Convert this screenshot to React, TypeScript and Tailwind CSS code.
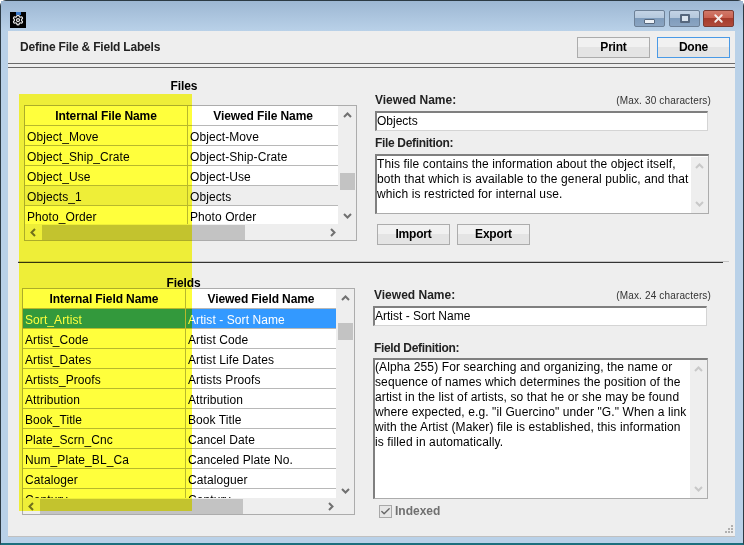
import React from "react";
import { Settings, X, Check } from "lucide-react";

const fileRows = [
	["Object_Move", "Object-Move"],
	["Object_Ship_Crate", "Object-Ship-Crate"],
	["Object_Use", "Object-Use"],
	["Objects_1", "Objects"],
	["Photo_Order", "Photo Order"],
];

const fieldRows = [
	["Sort_Artist", "Artist - Sort Name"],
	["Artist_Code", "Artist Code"],
	["Artist_Dates", "Artist Life Dates"],
	["Artists_Proofs", "Artists Proofs"],
	["Attribution", "Attribution"],
	["Book_Title", "Book Title"],
	["Plate_Scrn_Cnc", "Cancel Date"],
	["Num_Plate_BL_Ca", "Canceled Plate No."],
	["Cataloger", "Cataloguer"],
	["Century", "Century"],
];

// little scroll arrows, 9x6 chevrons
const Arrow = ({ dir, light }: { dir: "up" | "down" | "left" | "right"; light?: boolean }) => {
	const paths = {
		up: "M1 6 L4.5 2.5 L8 6",
		down: "M1 3 L4.5 6.5 L8 3",
		left: "M6 1 L2.5 4.5 L6 8",
		right: "M3 1 L6.5 4.5 L3 8",
	};
	return (
		<svg width="9" height="9" viewBox="0 0 9 9" fill="none" className="shrink-0">
			<path d={paths[dir]} stroke={light ? "#c8c8c8" : "#707070"} strokeWidth="2" />
		</svg>
	);
};

const Button = ({ label, focused }: { label: string; focused?: boolean }) => (
	<button
		className={`w-[73px] h-[21px] pb-[2px] border text-[12px] font-bold tracking-[-0.2px] text-black bg-[linear-gradient(#f1f1f1_0%,#f1f1f1_50%,#e4e4e4_50%,#e4e4e4_100%)] ${
			focused ? "border-[#4a9ae6]" : "border-[#acacac]"
		}`}
	>
		{label}
	</button>
);

const DataTable = ({
	headers,
	rows,
	selected,
	shaded,
	bodyHeight,
	thumbClass,
	downClass,
}: {
	headers: string[];
	rows: string[][];
	selected?: number;
	shaded?: number;
	bodyHeight: string;
	thumbClass: string;
	downClass: string;
}) => (
	<div className="w-[333px] border border-[#acacac] bg-[#eeeeee]">
		<div className="flex">
			<div className={`w-[313px] bg-white overflow-hidden ${bodyHeight}`}>
				<div className="flex h-[20px] border-b border-[#b8b8b8] font-bold text-[12px] tracking-[-0.1px] text-black">
					<div className="w-[163px] border-r border-[#b8b8b8] flex items-center justify-center">{headers[0]}</div>
					<div className="flex-1 flex items-center justify-center">{headers[1]}</div>
				</div>
				{rows.map((row, i) => (
					<div
						key={row[0]}
						className={`flex h-[20px] border-b border-[#b8b8b8] text-[12px] tracking-[0.08px] ${
							i === selected ? "bg-[#3399ff] text-white" : i === shaded ? "bg-[#eeeeee] text-black" : "bg-white text-black"
						}`}
					>
						<div className="w-[163px] border-r border-[#b8b8b8] pl-[2px] pt-[1px] leading-[20px] whitespace-nowrap">{row[0]}</div>
						<div className="flex-1 pl-[2px] pt-[1px] leading-[20px] whitespace-nowrap">{row[1]}</div>
					</div>
				))}
			</div>
			<div className="w-[18px] flex flex-col items-center pt-[5px]">
				<Arrow dir="up" />
				<div className={`w-[15px] h-[17px] bg-[#c3c3c3] ${thumbClass}`} />
				<div className={downClass}>
					<Arrow dir="down" />
				</div>
			</div>
		</div>
		<div className="flex items-center h-[16px] w-[331px] bg-[#eeeeee]">
			<div className="w-[17px] flex justify-center">
				<Arrow dir="left" />
			</div>
			<div className="w-[203px] h-[15px] bg-[#c3c3c3]" />
			<div className="flex-1 flex justify-end pr-[2px] mr-[17px]">
				<Arrow dir="right" />
			</div>
		</div>
	</div>
);

const TextBox = ({ lines, className }: { lines: string[]; className: string }) => (
	<div className={`flex border border-t-2 border-l-2 border-[#acacac] border-t-[#7f7f7f] border-l-[#7f7f7f] bg-white ${className}`}>
		<div className="flex-1 text-[12px] leading-[15px] tracking-[0.11px] text-black whitespace-nowrap">
			{lines.map((l) => (
				<div key={l}>{l}</div>
			))}
		</div>
		<div className="w-[17px] bg-[#eeeeee] flex flex-col items-center justify-between py-[5px]">
			<Arrow dir="up" light />
			<Arrow dir="down" light />
		</div>
	</div>
);

const NameInput = ({ value, className }: { value: string; className: string }) => (
	<div className={`h-[20px] border border-t-2 border-l-2 border-[#d4d4d4] border-t-[#7f7f7f] border-l-[#7f7f7f] bg-white text-[12px] leading-[16px] text-black ${className}`}>
		{value}
	</div>
);

const FieldLabel = ({ text, note, tight }: { text: string; note?: string; tight?: boolean }) => (
	<div className="flex items-baseline justify-between h-[13px] leading-[13px]">
		<span className={`text-[12px] font-bold text-[#222222] ${tight ? "tracking-[-0.33px]" : ""}`}>{text}</span>
		{note && <span className="text-[10px] text-[#333333] tracking-[0.15px]">{note}</span>}
	</div>
);

const CaptionButton = ({ children, className }: { children: React.ReactNode; className: string }) => (
	<div className={`w-[31px] h-[17px] rounded-[2px] border flex items-center justify-center ${className}`}>{children}</div>
);

export default function App() {
	return (
		<div
			className="relative w-[744px] h-[545px] overflow-hidden bg-white"
			style={{ fontFamily: '"Liberation Sans", Arial, sans-serif' }}
		>
			<div className="w-full h-full flex flex-col rounded-t-[6px] border border-b-2 border-[#2c3a44] border-b-[#1d6f7d] bg-[#b9d1e8]">
				{/* title bar */}
				<div className="h-[30px] flex items-start shrink-0 bg-[linear-gradient(#9db7d3,#b9d1e8)]">
					<div className="relative ml-[9px] mt-[11px] w-[16px] h-[16px] bg-black flex items-center justify-center">
						<div className="absolute left-[6px] top-0 w-[5px] h-[3px] bg-[#3a78c8]" />
						<Settings size={12} color="#e8e8e8" strokeWidth={2.5} />
					</div>
					<div className="ml-auto mr-[9px] mt-[9px] flex">
						<CaptionButton className="mr-[4px] border-[#6d8096] bg-[linear-gradient(#c3d3e5,#b4c7dc_50%,#7f9cbc_50%,#8ba5c2)]">
							<div className="mt-[5px] w-[11px] h-[5px] rounded-[1px] border border-[#56677d] bg-[#eef2f7]" />
						</CaptionButton>
						<CaptionButton className="mr-[3px] border-[#6d8096] bg-[linear-gradient(#c3d3e5,#b4c7dc_50%,#7f9cbc_50%,#8ba5c2)]">
							<div className="w-[10px] h-[9px] border-2 border-[#56677d] bg-[#dbe5ef] rounded-[1px]" />
						</CaptionButton>
						<CaptionButton className="border-[#7a3a32] bg-[linear-gradient(#d0796a,#c9604f_50%,#a53b2c_50%,#b04a3a)]">
							<X size={13} color="#f4ecea" strokeWidth={3.5} />
						</CaptionButton>
					</div>
				</div>

				{/* client area */}
				<div className="ml-[7px] mr-[8px] w-[727px] h-[506px] border-b border-[#c0c0c0] bg-[#eeeeee] flex flex-col">
					<div className="h-[32px] shrink-0 flex items-start justify-between pl-[12px] pr-[5px] pt-[6px]">
						<span className="text-[12px] font-bold tracking-[-0.2px] text-[#222222] leading-[20px]">Define File &amp; Field Labels</span>
						<div className="flex gap-[7px]">
							<Button label="Print" />
							<Button label="Done" focused />
						</div>
					</div>
					<div className="h-[5px] shrink-0 border-y border-[#6a6a6a]" />

					{/* files */}
					<div className="h-[193px] shrink-0 flex pl-[16px]">
						<div className="w-[333px]">
							<div className="pt-[11px] pr-[13px] mb-[12px] h-[25px] text-center text-[12px] font-bold tracking-[-0.1px] text-black leading-[14px]">Files</div>
							<DataTable
								headers={["Internal File Name", "Viewed File Name"]}
								rows={fileRows}
								shaded={3}
								bodyHeight="h-[118px]"
								thumbClass="mt-[53px]"
								downClass="mt-[21px]"
							/>
						</div>
						<div className="ml-[18px] w-[336px] pt-[26px]">
							<FieldLabel text="Viewed Name:" note="(Max. 30 characters)" />
							<NameInput value="Objects" className="mt-[4px] w-[333px]" />
							<div className="mt-[6px]">
								<FieldLabel text="File Definition:" tight />
							</div>
							<TextBox
								className="mt-[4px] w-[334px] h-[60px] pt-[1px]"
								lines={[
									"This file contains the information about the object itself,",
									"both that which is available to the general public, and that",
									"which is restricted for internal use.",
								]}
							/>
							<div className="mt-[10px] ml-[2px] flex gap-[7px]">
								<Button label="Import" />
								<Button label="Export" />
							</div>
						</div>
					</div>

					{/* separator: light line runs a little further than the dark one */}
					<div className="shrink-0 ml-[10px] mr-[6px]">
						<div className="h-[1px] bg-[#c4c4c4]" />
						<div className="h-[1px] mr-[6px] bg-[#333333]" />
					</div>

					{/* fields */}
					<div className="flex-1 flex pl-[14px]">
						<div className="w-[333px]">
							<div className="pt-[13px] pr-[10px] h-[25px] text-center text-[12px] font-bold tracking-[-0.1px] text-black leading-[14px]">Fields</div>
							<DataTable
								headers={["Internal Field Name", "Viewed Field Name"]}
								rows={fieldRows}
								selected={0}
								bodyHeight="h-[209px]"
								thumbClass="mt-[20px]"
								downClass="mt-[146px]"
							/>
						</div>
						<div className="ml-[18px] w-[338px] pt-[26px]">
							<div className="pl-[1px]">
								<FieldLabel text="Viewed Name:" note="(Max. 24 characters)" />
							</div>
							<NameInput value="Artist - Sort Name" className="mt-[4px] w-[334px]" />
							<div className="mt-[16px] pl-[1px]">
								<FieldLabel text="Field Definition:" tight />
							</div>
							<TextBox
								className="mt-[3px] w-[335px] h-[141px]"
								lines={[
									"(Alpha 255) For searching and organizing, the name or",
									"sequence of names which determines the position of the",
									"artist in the list of artists, so that he or she may be found",
									"where expected, e.g. \"il Guercino\" under \"G.\" When a link",
									"with the Artist (Maker) file is established, this information",
									"is filled in automatically.",
								]}
							/>
							<div className="mt-[6px] ml-[6px] flex items-center gap-[3px]">
								<div className="w-[13px] h-[13px] border border-[#a8a8a8] bg-[#e6e6e6] flex items-center justify-center">
									<Check size={11} color="#666666" strokeWidth={3} />
								</div>
								<span className="text-[12px] font-bold text-[#707070] leading-[13px]">Indexed</span>
							</div>
						</div>
					</div>
				</div>
			</div>

			{/* highlighter overlay lying across the left column */}
			<div className="absolute left-[19px] top-[94px] w-[173px] h-[417px] bg-[#ffff3c] mix-blend-multiply pointer-events-none" />

			{/* resize grip */}
			<svg className="absolute left-[724px] top-[525px]" width="10" height="10" viewBox="0 0 10 10" fill="#b0b0b0">
				<rect x="7" y="0" width="2" height="2" />
				<rect x="4" y="3" width="2" height="2" />
				<rect x="7" y="3" width="2" height="2" />
				<rect x="1" y="6" width="2" height="2" />
				<rect x="4" y="6" width="2" height="2" />
				<rect x="7" y="6" width="2" height="2" />
			</svg>
		</div>
	);
}
